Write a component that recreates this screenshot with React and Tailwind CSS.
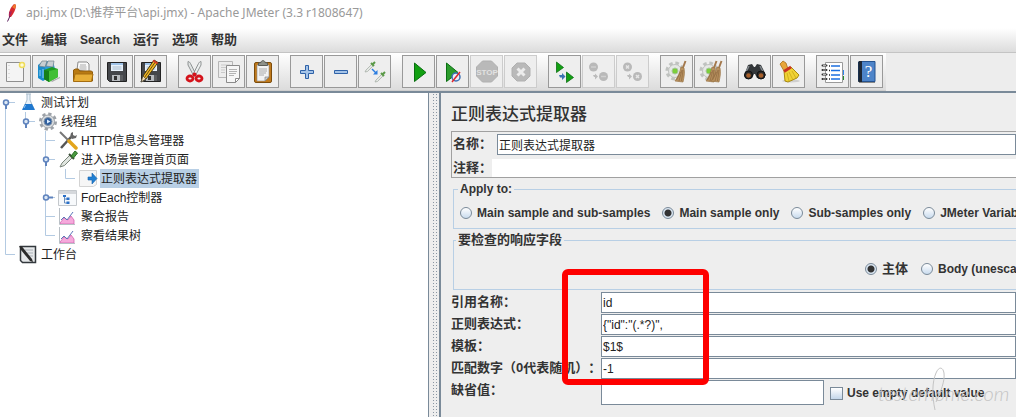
import React, { useState } from "react";

const PAGE_FONT = "font-['Liberation_Sans','Noto_Sans_CJK_SC',sans-serif]";

// every toolbar icon is drawn on a 25px grid
function Icon({ children }) {
  return (
    <svg width="25" height="25" viewBox="0 0 25 25" fill="none" className="block shrink-0">
      {children}
    </svg>
  );
}

const OCTAGON = "M8.500 2h9l6 6v9l-6 6h-9l-6-6V8z";

function Gear({ x = 0 }) {
  return (
    <g transform={`translate(${x} 0)`}>
      <circle cx="11" cy="12" r="8" stroke="#bfc2bf" strokeWidth="3" strokeDasharray="3.600 2.700" />
      <circle cx="11" cy="12" r="6.500" fill="#e6e8e6" stroke="#bfc2bf" />
      <circle cx="11" cy="12" r="3" fill="#7ccf3c" stroke="#a9c4a0" />
    </g>
  );
}

function Whisk({ x = 0 }) {
  return (
    <g transform={`translate(${x} 0)`}>
      <path d="M21.500 2l-3 8" stroke="#a3784c" strokeWidth="2" />
      <path d="M17 8l3 1c1 5 0 9-1 14l-8-1c3-4 5-9 6-14z" fill="#b9925f" stroke="#9a7446" strokeWidth=".7" />
      <path d="M18 11l-3 11M19 11l-1.500 11M16.500 13l-4 8" stroke="#84603a" strokeWidth=".6" />
    </g>
  );
}

function Floppy() {
  return (
    <>
      <path d="M3.500 3.500h19v19h-17l-2-2z" fill="#45474b" stroke="#222" />
      <path d="M7 4h12v8H7z" fill="#e9f2fb" />
      <path d="M7 4h12v2H7z" fill="#9fc3e8" />
      <path d="M8.500 8h9M8.500 10h9" stroke="#a9bccd" />
      <path d="M8 16h11v6H8z" fill="#b9bcc0" />
      <path d="M10 17h3v4h-3z" fill="#333" />
      <path d="M16 16h3v6h-3z" fill="#5b5d60" />
    </>
  );
}

function Pipette({ x = 0, y = 0 }) {
  return (
    <g transform={`translate(${x} ${y})`}>
      <path d="M0 11l1-2 6-6 1.500 1.500-6 6z" fill="#e4e8e4" stroke="#a8b0a8" strokeWidth=".8" />
      <path d="M6 2l3 3M7.500 3.500L10 1" stroke="#5b9a48" strokeWidth="2" />
    </g>
  );
}

const ICONS = {
  New: (
    <>
      <path d="M4.500 3.500h17v19h-17z" fill="#f4f4f4" stroke="#8f8f8f" />
      <path d="M7 6v15" stroke="#c5c5c5" strokeDasharray="1 3" />
      <circle cx="20" cy="6" r="2.500" fill="#fffbd5" stroke="#efdc5a" strokeWidth="1.500" />
    </>
  ),
  Templates: (
    <>
      <path d="M2 6l5-4 5 1v16l-5 3-5-3z" fill="#1a8ccc" />
      <path d="M7 2h10l2 8-7 9z" fill="#2c9bd8" />
      <path d="M3 7l3-5 5 0-2 6zM10 7l2-5h6l-1 6z" fill="#c8ced2" stroke="#74828b" strokeWidth=".7" />
      <path d="M4 11v6M7 10v9" stroke="#8fd0f4" />
      <path d="M8 11l8-3 6 2v8l-9 5-5-3z" fill="#1f9a22" />
      <path d="M13 12l9-2v8l-9 5z" fill="#42bf35" />
      <path d="M8 11l5 1v11l-5-3z" fill="#168018" />
      <path d="M15 22l9-4v1l-8 4z" fill="#aaa" />
    </>
  ),
  Open: (
    <>
      <path d="M7 11l1-8h9l2 2v8z" fill="#fafafa" stroke="#8b8b8b" />
      <path d="M10 6h6M9.500 8h7M9.500 10h7" stroke="#aaa" />
      <path d="M3.500 22V11l2-1h3l1 2h12l1 1v9z" fill="#b97a12" stroke="#8f5b0a" />
      <path d="M3.500 22.500L5 15h18l-1.500 7.500z" fill="#e7ae37" stroke="#a56d10" />
    </>
  ),
  Save: <Floppy />,
  "Save as": (
    <>
      <Floppy />
      <path d="M3 23l2-6L16 1l4 2.500L8 20z" fill="#f1b925" stroke="#4b3a12" />
      <path d="M6.500 18.500L18 2" stroke="#6b4b12" />
      <path d="M3 23l2-6 3 3z" fill="#f0ddb6" stroke="#333" strokeWidth=".6" />
      <path d="M15 1.500l4.500 3" stroke="#d03a2a" strokeWidth="2" />
    </>
  ),
  Cut: (
    <>
      <path d="M6 2.500c1 0 2 1 2.500 2l5.500 11-2 2L6 6z" fill="#dfe2e2" stroke="#858989" strokeWidth=".9" />
      <path d="M19 2.500c-1 0-2 1-2.500 2L11 15.500l2 2L19 6z" fill="#eceeee" stroke="#858989" strokeWidth=".9" />
      <circle cx="12.500" cy="15.500" r="2" fill="#d4131b" />
      <ellipse cx="8" cy="19.500" rx="3" ry="2.500" stroke="#d4131b" strokeWidth="2.800" />
      <ellipse cx="17" cy="19.500" rx="3" ry="2.500" stroke="#d4131b" strokeWidth="2.800" />
    </>
  ),
  Copy: (
    <>
      <path d="M2.500 2.500h14v16h-14z" fill="#ececec" stroke="#b5b5b5" />
      <path d="M5 6h9M5 8.500h5M5 11h4M5 13.500h4" stroke="#c9c9c9" />
      <path d="M10.500 6.500h13v13l-4 4h-9z" fill="#f6f6f6" stroke="#8b8b8b" />
      <path d="M13 10.500h8M13 12.500h8M13 14.500h7M13 16.500h5" stroke="#b3b3b3" />
      <path d="M19.500 23.500v-4h4z" fill="#fff" stroke="#8b8b8b" />
    </>
  ),
  Paste: (
    <>
      <rect x="4.500" y="3.500" width="17" height="20" rx="1.500" fill="#c07a1c" stroke="#7c4c0c" />
      <path d="M7 6h12v12l-4 4H7z" fill="#f3f3f3" stroke="#8d8d8d" strokeWidth=".6" />
      <path d="M9 10h8M9 12h8M9 14h7M9 16h5" stroke="#aaa" />
      <path d="M15 22v-4h4z" fill="#d0d0d0" stroke="#777" strokeWidth=".6" />
      <path d="M8.500 6.500V4L11 3.500C11 1 15 1 15 3.500l2.500.5v2.500z" fill="#8e9189" stroke="#5b5d57" />
    </>
  ),
  Expand: <path d="M11.500 6.500h3v5h5v3h-5v5h-3v-5h-5v-3h5z" fill="#a5c4e8" stroke="#2f62a8" />,
  Collapse: <path d="M6.500 11.500h13v3h-13z" fill="#a5c4e8" stroke="#2f62a8" />,
  Toggle: (
    <>
      <Pipette x={3} y={2} />
      <Pipette x={13} y={12} />
      <path d="M10 10l4 4" stroke="#2b7de0" strokeWidth="1.500" />
      <path d="M15.500 11v4.500H11z" fill="#2b7de0" />
    </>
  ),
  Start: <path d="M8.500 4l11.500 9.500-11.500 9z" fill="#12a012" stroke="#0a6f12" />,
  "Start no pauses": (
    <>
      <path d="M6.500 4L18 13.500l-11.500 9z" fill="#2c9c2c" stroke="#0a6f12" />
      <circle cx="16" cy="18" r="4" fill="#e8eefa" stroke="#3c6fb5" strokeWidth="1.500" />
      <path d="M12 23l8-10" stroke="#e0252b" strokeWidth="1.500" />
    </>
  ),
  Stop: (
    <>
      <path d={OCTAGON} fill="#b9b9b9" stroke="#b0b0b0" />
      <text x="13" y="15.500" textAnchor="middle" fontSize="8" fontWeight="700" fill="#e2e2e2">STOP</text>
    </>
  ),
  Shutdown: (
    <>
      <path d="M9 4h8l5 5v8l-5 5H9l-5-5V9z" fill="#b9b9b9" stroke="#b0b0b0" />
      <path d="M9.500 9.500l7 7M16.500 9.500l-7 7" stroke="#ececec" strokeWidth="3" />
    </>
  ),
  "Remote start all": (
    <>
      <path d="M4.500 3l7 5.500-7 5z" fill="#12a012" stroke="#0a6f12" strokeWidth=".8" />
      <path d="M14.500 13l7 5.500-7 5z" fill="#12a012" stroke="#0a6f12" strokeWidth=".8" />
      <path d="M7 16h3v-2l3.500 3.500L10 21v-2.500H8z" fill="#3c74b0" />
    </>
  ),
  "Remote stop all": (
    <>
      <circle cx="7.500" cy="8" r="4.500" fill="#b9b9b9" />
      <circle cx="17.500" cy="17.500" r="4.500" fill="#b9b9b9" />
      <path d="M5 8h5M15 17.500h5" stroke="#d0d0d0" strokeWidth="1.500" />
      <path d="M7 16h2v-1.500l3 3-3 3V18H8z" fill="#bcbcbc" />
    </>
  ),
  "Remote shutdown all": (
    <>
      <circle cx="7.500" cy="8" r="4.500" fill="#b9b9b9" />
      <circle cx="17.500" cy="17.500" r="4.500" fill="#b9b9b9" />
      <path d="M6 6.500l3 3M9 6.500l-3 3M16 16l3 3M19 16l-3 3" stroke="#e6e6e6" strokeWidth="1.500" />
      <path d="M7 16h2v-1.500l3 3-3 3V18H8z" fill="#bcbcbc" />
    </>
  ),
  Clear: (
    <>
      <Gear />
      <Whisk />
    </>
  ),
  "Clear all": (
    <>
      <Gear />
      <Whisk x={-3} />
      <Whisk x={2} />
    </>
  ),
  Search: (
    <>
      <path d="M6 6l4-1 2 3h1l2-3 4 1 5 10-4 4-5-1-2-4h-1l-2 4-5 1-3-3z" fill="#33373a" />
      <path d="M7 7l-3 6M18 7l3 6" stroke="#80878b" strokeWidth="1.500" />
      <circle cx="6.500" cy="16" r="4" fill="#2a2a2a" stroke="#111" />
      <circle cx="19" cy="16" r="4" fill="#2a2a2a" stroke="#111" />
      <circle cx="6.500" cy="16.500" r="2.300" fill="#a85f2a" />
      <circle cx="19" cy="16.500" r="2.300" fill="#a85f2a" />
    </>
  ),
  "Reset search": (
    <>
      <ellipse cx="15" cy="22" rx="9" ry="1.500" fill="#cfcfcf" />
      <path d="M4 5l3-3 3 2 2 6-4 2z" fill="#e8a63a" stroke="#a8701c" strokeWidth=".8" />
      <path d="M8 12l7-4 8 8-2 3-9 4-3-1z" fill="#f0d234" stroke="#a98a10" />
      <path d="M13 13l4 8M16 12l4 7M11 14l2 8" stroke="#c9aa18" strokeWidth=".8" />
      <path d="M8 12.500l7-4.500" stroke="#c93222" strokeWidth="2.800" />
    </>
  ),
  "Function helper": (
    <>
      <path d="M21 11h3v5h-3z" fill="#2f86ea" />
      <path d="M21 17h3v4h-3z" fill="#1d8e2b" />
      <path d="M5.500 3.500h17v20h-17z" fill="#fff" stroke="#9a9a9a" />
      <path d="M9 7h1M9 11.500h1M9 16h1M9 20h1" stroke="#222" strokeWidth="1.500" />
      <path d="M11 7h9M11 11.500h9M11 16h9M11 20h9" stroke="#1b6fe0" strokeWidth="1.500" />
      <path d="M2.500 6.500h4M2.500 11h4M2.500 15.500h4M2.500 20h4" stroke="#333" strokeWidth="2" strokeLinecap="round" />
      <path d="M3 6.500h3M3 11h3M3 15.500h3M3 20h3" stroke="#eee" strokeWidth=".7" />
    </>
  ),
  Help: (
    <>
      <path d="M4 3l2-1v20l-2 1z" fill="#111" />
      <path d="M5 2.500h16v20H5z" fill="#4d84c9" stroke="#24528f" />
      <path d="M5 2h3v21H5z" fill="#1d2735" />
      <path d="M5 23.500h16" stroke="#888" />
      <text x="14.500" y="18" textAnchor="middle" fontSize="17" fill="#fff" className="font-['Liberation_Serif',serif]">?</text>
    </>
  ),
};

const TOOLBAR = [
  ["New", "Templates", "Open", "Save", "Save as"],
  ["Cut", "Copy", "Paste"],
  ["Expand", "Collapse", "Toggle"],
  ["Start", "Start no pauses", "Stop", "Shutdown"],
  ["Remote start all", "Remote stop all", "Remote shutdown all"],
  ["Clear", "Clear all"],
  ["Search", "Reset search"],
  ["Function helper", "Help"],
];

const DISABLED = ["Stop", "Shutdown", "Remote stop all", "Remote shutdown all"];

function Toolbar() {
  return (
    <div className="flex h-[39px] border-t border-[#c4c4c4] bg-[#ededed]">
      <div className="-ml-0.5 flex gap-[11px] border-b border-[#cfcfcf] bg-linear-to-b from-white to-[#dcdcdc] pr-[3px] pt-0.5">
        {TOOLBAR.map((group) => (
          <div key={group[0]} className="flex gap-px">
            {group.map((name) => (
              <button
                key={name}
                type="button"
                aria-label={name}
                disabled={DISABLED.includes(name)}
                className="flex size-[33px] items-center justify-center border border-[#999] bg-[#eee] disabled:border-[#ccc]"
              >
                <Icon>{ICONS[name]}</Icon>
              </button>
            ))}
          </div>
        ))}
      </div>
    </div>
  );
}

const TREE_ICONS = {
  plan: (
    <>
      <path d="M8 1h5M9 1v6l-4 9h11l-4-9V1" fill="#e8f1fa" stroke="#a9bccb" />
      <path d="M7 11h7l3 6H4z" fill="#1f78cf" />
      <path d="M7.500 12l-1.500 3" stroke="#8fc4f5" />
    </>
  ),
  gear: (
    <>
      <circle cx="10" cy="9.500" r="7.500" stroke="#9da2a8" strokeWidth="3" strokeDasharray="3.200 2.690" />
      <circle cx="10" cy="9.500" r="6.500" fill="#dadde0" stroke="#9da2a8" />
      <circle cx="10" cy="9.500" r="4" fill="#2f5f9e" stroke="#8494a8" />
      <path d="M9 7.500l3.500 2L9 11.500z" fill="#dcecff" />
    </>
  ),
  tools: (
    <>
      <path d="M3 17L13 6" stroke="#555" strokeWidth="2.500" />
      <path d="M12 6l1-4 2-1v3l2 1 2-1-1 3-4 1z" fill="#666" />
      <path d="M2 1l9 9" stroke="#777" strokeWidth="2" />
      <path d="M11 10l7 7" stroke="#e3a51c" strokeWidth="3.500" strokeLinecap="round" />
    </>
  ),
  sampler: (
    <>
      <path d="M2 17l2-4 8-8 2.500 2.500-8 8z" fill="#dfe5df" stroke="#7b857b" />
      <path d="M11 4l5 5" stroke="#3c4f38" strokeWidth="2" />
      <path d="M13 6l4-5 2.500 2-4 5z" fill="#4a9a40" stroke="#2c6f28" />
    </>
  ),
  extractor: (
    <>
      <path d="M1.500 1.500h17v14l-3 2h-14z" fill="#f6f6f6" stroke="#d3d3d3" />
      <path d="M10 8h4V4l5 5.500-5 5.500v-4h-4z" fill="#2381d3" stroke="#1763ab" strokeWidth=".6" />
    </>
  ),
  controller: (
    <>
      <path d="M.5 2.500h18v15H.5z" fill="#f7f9fb" stroke="#c4c8cc" />
      <path d="M1 3h17v3H1z" fill="#d5d8dc" />
      <path d="M6.500 9v6h3M6.500 11h3" stroke="#6b8fbd" />
      <path d="M5 7h3v2H5zM8.500 9.500h3v2.500h-3zM8.500 13.500h3V16h-3z" fill="#2a70c8" />
    </>
  ),
  chart: (
    <>
      <path d="M2 16l4-5 4 2 3-4 3 4v4H2z" fill="#f6a9dc" stroke="#d065ae" strokeWidth=".8" />
      <path d="M3 13l3-3 3 3 6-8" stroke="#5c76b8" />
      <path d="M1.500 1v16.500H17" stroke="#b9c0c6" />
    </>
  ),
  bench: (
    <>
      <path d="M2.500 1.500h15v16h-13l-2-2z" fill="#e6e8ea" stroke="#33383d" strokeWidth="1.500" />
      <path d="M7 5h8M7 8h8M9 11h6" stroke="#a9b0b6" />
      <path d="M1 1l3 .5L14 14l1 3-3-1L3 5z" fill="#2b2b2b" />
    </>
  ),
};

// guides: one entry per indent level, handle: open / closed node knob on the last level
const TREE = [
  { label: "测试计划", icon: "plan", guides: ["start"], handle: "open" },
  { label: "线程组", icon: "gear", guides: ["line", "end"], handle: "open" },
  { label: "HTTP信息头管理器", icon: "tools", guides: ["line", "", "tee"] },
  { label: "进入场景管理首页面", icon: "sampler", guides: ["line", "", "tee"], handle: "open" },
  { label: "正则表达式提取器", icon: "extractor", guides: ["line", "", "line", "end"], selected: true },
  { label: "ForEach控制器", icon: "controller", guides: ["line", "", "tee"], handle: "closed" },
  { label: "聚合报告", icon: "chart", guides: ["line", "", "tee"] },
  { label: "察看结果树", icon: "chart", guides: ["line", "", "end"] },
  { label: "工作台", icon: "bench", guides: ["end"] },
];

const GUIDE_PATHS = {
  "": "",
  line: "M7.500 0v19",
  start: "M7.500 9.500V19M7.500 9.500H17",
  tee: "M7.500 0v19M7.500 9.500H17",
  end: "M7.500 0v9.500H17",
};

function Guide({ type, handle }) {
  return (
    <svg width="20" height="19" viewBox="0 0 20 19" fill="none" className="block shrink-0">
      <path d={GUIDE_PATHS[type]} stroke="#b3cae2" />
      {handle && <path d={handle === "open" ? "M8 10v6" : "M8 9.500h7"} stroke="#5f83bd" strokeWidth="2" />}
      {handle && <circle cx="8" cy="9.500" r="2.500" fill="#dce8f5" stroke="#5f83bd" strokeWidth="1.500" />}
    </svg>
  );
}

function Tree() {
  return (
    <ul className="w-[429px] shrink-0 border-r border-[#7a8a99] bg-white text-xs text-[#222]">
      {TREE.map((node) => (
        <li key={node.label} className="-ml-0.5 flex h-[19px] items-center">
          {node.guides.map((type, i) => (
            <Guide key={i} type={type} handle={i === node.guides.length - 1 ? node.handle : null} />
          ))}
          <svg width="20" height="19" viewBox="0 0 20 19" fill="none" className="mr-0.5 block shrink-0">
            {TREE_ICONS[node.icon]}
          </svg>
          <span className={`h-[19px] whitespace-nowrap pl-px pr-0.5 leading-5 ${node.selected ? "bg-[#b8cfe5]" : ""}`}>
            {node.label}
          </span>
        </li>
      ))}
    </ul>
  );
}

function Radio({ name, label, checked, onChange, cjk }) {
  return (
    <label className="flex shrink-0 items-center gap-[5px] whitespace-nowrap">
      <input
        type="radio"
        name={name}
        checked={checked}
        onChange={onChange}
        className="size-3 appearance-none rounded-full border border-[#7a8a99] bg-linear-to-b from-white to-[#c9dbee] checked:bg-[radial-gradient(circle,#333_0_3px,#dbe7f3_4px)]"
      />
      <span className={cjk ? "text-[13px] leading-4" : "text-xs"}>{label}</span>
    </label>
  );
}

const FIELD = "min-w-0 border border-[#7a8a99] bg-white pl-px text-xs font-normal text-[#222] outline-none";

function FormRow({ id, label, value }) {
  return (
    <div className="flex h-[22px] items-start">
      <label htmlFor={id} className="w-[150px] shrink-0 whitespace-nowrap text-[13px] leading-[19px]">{label}</label>
      <input id={id} defaultValue={value} className={`${FIELD} h-[21px] flex-1`} />
    </div>
  );
}

const SCOPES = ["Main sample and sub-samples", "Main sample only", "Sub-samples only", "JMeter Variable"];

function Extractor() {
  const [scope, setScope] = useState("Main sample only");
  const [field, setField] = useState("主体");

  return (
    <main className="relative min-w-0 flex-1 overflow-hidden border-l-2 border-[#7a8a99] bg-[#eee] pb-3 pl-2.5 font-bold text-[#333] [text-spacing-trim:space-all]">
      <h1 className="pt-2.5 text-[17px] font-medium leading-6">正则表达式提取器</h1>

      <div className="mt-1 border-y border-l border-[#a0a0a0] pl-px pt-px text-[13px]">
        <div className="flex h-[22px] items-center">
          <label htmlFor="name" className="w-11 shrink-0 whitespace-nowrap">名称：</label>
          <input id="name" defaultValue="正则表达式提取器" className={`${FIELD} h-[21px] flex-1`} />
        </div>
        <div className="mt-1 flex h-[18px] items-center">
          <label htmlFor="comment" className="w-[39px] shrink-0 whitespace-nowrap">注释：</label>
          <input id="comment" className="h-[18px] min-w-0 flex-1 bg-white px-1 text-xs font-normal outline-none" />
        </div>
      </div>

      <fieldset className="ml-0.5 mt-[3px] h-12 border border-r-0 border-[#b8cfe5] pl-1.5">
        <legend className="-ml-0.5 px-0.5 text-xs leading-4">Apply to:</legend>
        <div className="flex gap-3 pt-2">
          {SCOPES.map((s) => (
            <Radio key={s} name="scope" label={s} checked={scope === s} onChange={() => setScope(s)} />
          ))}
        </div>
      </fieldset>

      <fieldset className="ml-0.5 mt-0.5 h-[59px] border border-r-0 border-[#b8cfe5]">
        <legend className="ml-0.5 px-0.5 text-[13px] leading-[18px]">要检查的响应字段</legend>
        <div className="flex gap-[13px] pl-[411px] pt-3">
          <Radio name="field" label="主体" cjk checked={field === "主体"} onChange={() => setField("主体")} />
          <Radio name="field" label="Body (unescaped)" checked={field === "body"} onChange={() => setField("body")} />
        </div>
      </fieldset>

      <div className="pt-0.5">
        <FormRow id="ref" label="引用名称：" value="id" />
        <FormRow id="regex" label="正则表达式：" value={'{"id":"(.*?)",'} />
        <FormRow id="template" label="模板：" value="$1$" />
        <FormRow id="match" label="匹配数字（0代表随机）：" value="-1" />
        <div className="flex items-start">
          <label htmlFor="default" className="w-[150px] shrink-0 text-[13px] leading-[19px]">缺省值：</label>
          <input id="default" className={`${FIELD} h-[25px] w-[223px]`} />
          <label className="ml-1.5 flex h-[26px] items-center gap-1 whitespace-nowrap text-xs">
            <input type="checkbox" className="size-[13px] appearance-none border border-[#7a8a99] bg-linear-to-b from-white to-[#c3d6ea]" />
            Use empty default value
          </label>
        </div>
      </div>

      {/* highlight around the extractor fields */}
      <div className="pointer-events-none absolute left-[121px] top-[176px] h-[116px] w-[147px] rounded-md border-6 border-[#fe0000]" />

      <div className="pointer-events-none absolute left-[437px] top-[272px] h-12 w-[140px] text-[#c4c4c4]">
        <span className="absolute bottom-2 left-0 font-['Lato',sans-serif] text-xl font-light italic leading-6">testerhome.com</span>
        <svg width="140" height="48" viewBox="0 0 140 48" fill="none" className="absolute left-0 top-0">
          <path d="M57 45c-3-14-3-28 1-37 3-7 7-6 8 0 1 8-3 18-8 29" stroke="currentColor" />
        </svg>
      </div>
    </main>
  );
}

export default function App() {
  return (
    <div className={`flex min-h-screen flex-col overflow-hidden bg-[#eee] ${PAGE_FONT}`}>
      <header className="flex h-7 items-center bg-white pb-0.5 pl-1.5 font-['Noto_Sans','Noto_Sans_CJK_SC',sans-serif] text-xs text-[#999]">
        <svg width="12" height="20" viewBox="0 0 12 20" fill="none" className="mr-2 block shrink-0">
          <path d="M3 14C2 9 5 4 8 1l2 1c0 4-2 8-5 12z" fill="#d8292f" />
          <path d="M6 4l3-3 1 1-1 4z" fill="#ee7a2c" />
          <path d="M3 9l3-1-2 6H3z" fill="#a8235c" />
          <path d="M1.500 18.500L4 13" stroke="#5a1e5c" />
        </svg>
        <span className="whitespace-nowrap">api.jmx (D:\推荐平台\api.jmx) - Apache JMeter (3.3 r1808647)</span>
      </header>
      <nav className="flex h-6 items-center gap-[13px] bg-linear-to-b from-white to-[#dcdcdc] pl-0.5 text-[13px] font-bold text-[#333]">
        {["文件", "编辑", "Search", "运行", "选项", "帮助"].map((item) => (
          <button key={item} type="button" className={item === "Search" ? "text-xs" : ""}>{item}</button>
        ))}
      </nav>
      <Toolbar />
      <div className="flex flex-1 border-t-2 border-[#7a8a99]">
        <Tree />
        <div className="flex w-2.5 shrink-0 bg-[#eee] pl-[3px]">
          <div className="w-1.5 bg-[radial-gradient(#8a96a3_0.5px,transparent_1px)] bg-size-[3px_3px]" />
        </div>
        <Extractor />
      </div>
    </div>
  );
}
